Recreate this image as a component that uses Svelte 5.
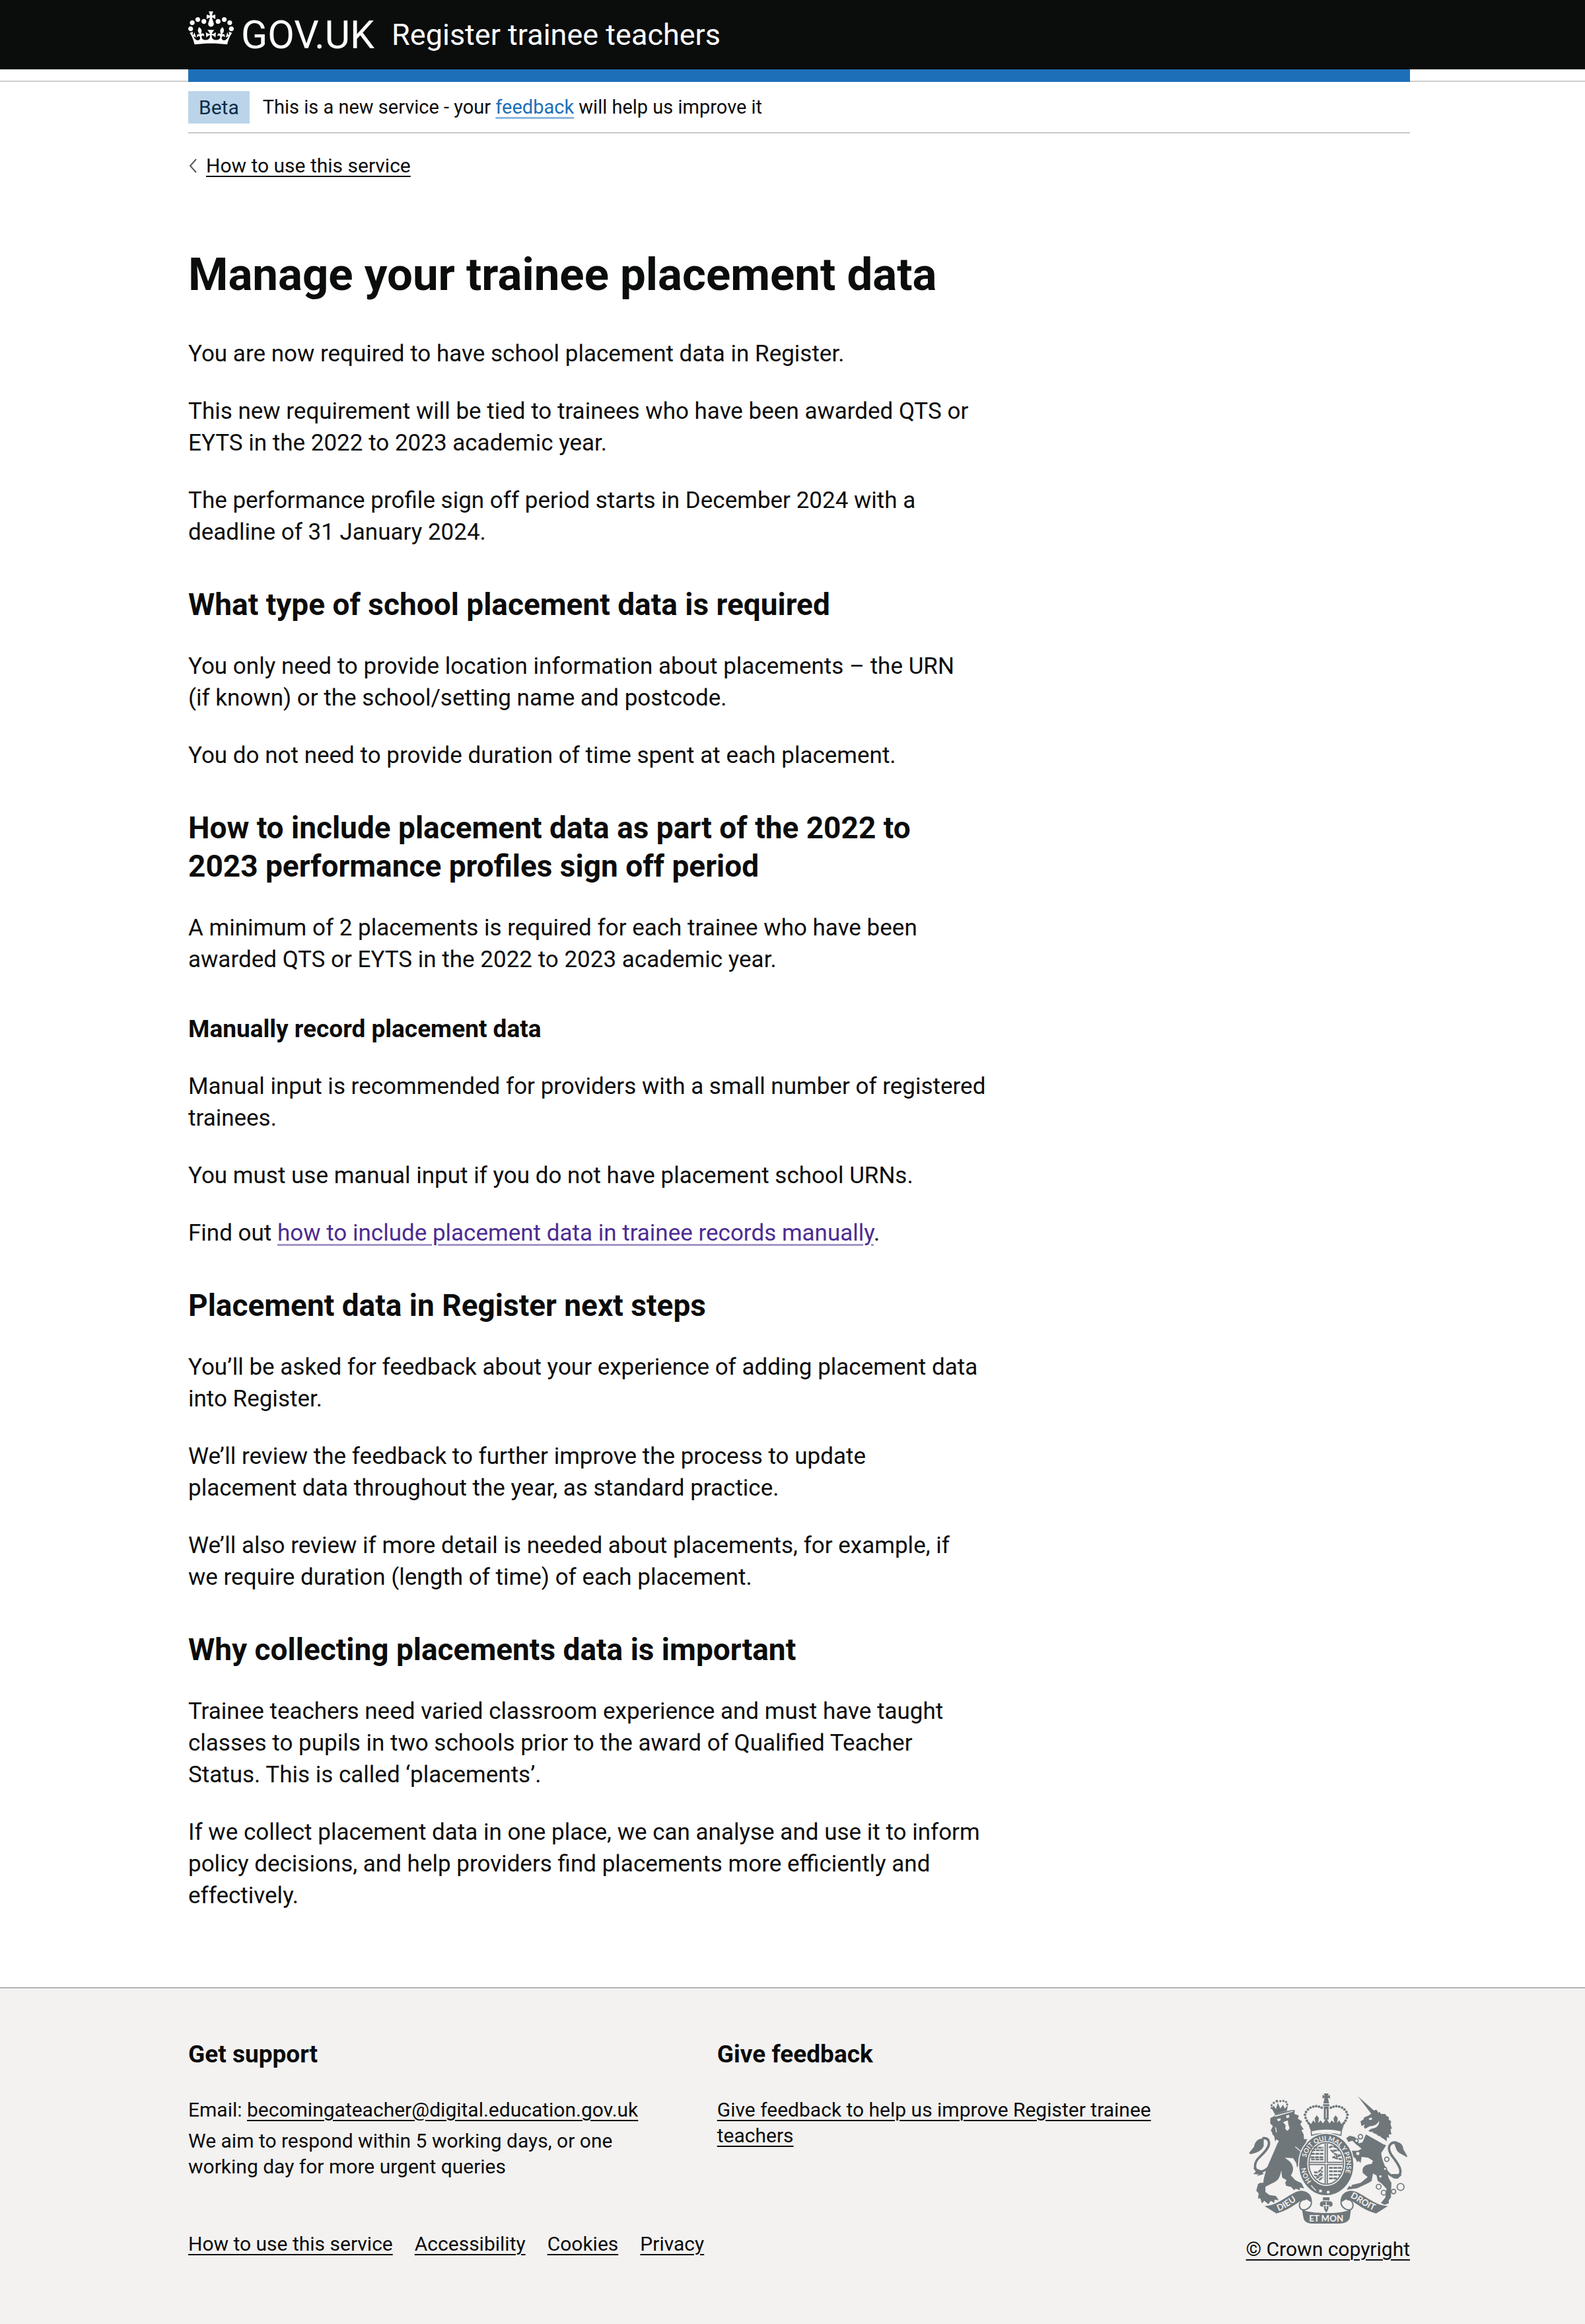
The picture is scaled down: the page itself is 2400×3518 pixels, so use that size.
<script>
  const footerLinks = ['How to use this service', 'Accessibility', 'Cookies', 'Privacy'];

  // Beads along the two arches of the central crown.
  const arch = [
    [478, 178], [466, 173], [453, 171], [440, 173], [427, 178], [416, 186], [407, 197], [402, 210], [405, 224], [411, 237], [418, 248]
  ];
  const beads = [...arch, ...arch.map(([x, y]) => [998 - x, y])];

  // Links of the unicorn's chain: x, y, radius.
  const chain = [
    [655, 310, 10], [637, 328, 8], [643, 387, 10], [775, 413, 10], [767, 457, 7],
    [746, 491, 8], [738, 538, 11], [761, 565, 11], [806, 560, 10], [838, 539, 16]
  ];
</script>

<svelte:head><title>Manage your trainee placement data - Register trainee teachers</title></svelte:head>

<div class="page">
  <header class="header">
    <div class="container header-row">
      <a class="logo" href="#home" aria-label="GOV.UK">
        <svg class="crown" viewBox="0 0 132 97" aria-hidden="true">
          <path d="M25 30.2c3.5 1.5 7.7-.2 9.1-3.7 1.5-3.6-.2-7.8-3.9-9.2-3.6-1.4-7.6.3-9.1 3.9-1.4 3.5.3 7.5 3.9 9zM9 39.5c3.6 1.5 7.8-.2 9.2-3.7 1.5-3.6-.2-7.8-3.9-9.1-3.6-1.5-7.6.2-9.1 3.8-1.4 3.5.3 7.5 3.8 9zM4.4 57.2c3.5 1.5 7.7-.2 9.1-3.8 1.5-3.6-.2-7.7-3.9-9.1-3.5-1.5-7.6.3-9.1 3.8-1.4 3.5.3 7.6 3.9 9.1zm38.3-21.4c3.5 1.5 7.7-.2 9.1-3.8 1.5-3.6-.2-7.7-3.9-9.1-3.6-1.5-7.6.3-9.1 3.8-1.3 3.6.4 7.7 3.9 9.1zm64.4-5.6c-3.6 1.5-7.8-.2-9.1-3.7-1.5-3.6.2-7.8 3.8-9.2 3.6-1.4 7.7.3 9.2 3.9 1.3 3.5-.4 7.5-3.9 9zm15.9 9.3c-3.6 1.5-7.7-.2-9.1-3.7-1.5-3.6.2-7.8 3.7-9.1 3.6-1.5 7.7.2 9.2 3.8 1.5 3.5-.3 7.5-3.8 9zm4.7 17.7c-3.6 1.5-7.8-.2-9.2-3.8-1.5-3.6.2-7.7 3.9-9.1 3.6-1.5 7.7.3 9.2 3.8 1.3 3.5-.4 7.6-3.9 9.1zM89.3 35.8c-3.6 1.5-7.8-.2-9.2-3.8-1.4-3.6.2-7.7 3.9-9.1 3.6-1.5 7.7.3 9.2 3.8 1.4 3.6-.3 7.7-3.9 9.1zM69.7 17.7l8.9 4.7V9.3l-8.9 2.8c-.2-.3-.5-.6-.9-.9L72.4 0H59.6l3.5 11.2c-.3.3-.6.5-.9.9l-8.8-2.8v13.1l8.8-4.7c.3.3.6.7.9.9l-5 15.4v.1c-.2.8-.4 1.6-.4 2.4 0 4.1 3.1 7.5 7 8.1h.2c.3 0 .7.1 1 .1.4 0 .7 0 1-.1h.2c4-.6 7.1-4.1 7.1-8.1 0-.8-.1-1.7-.4-2.4V34l-5.1-15.4c.4-.2.7-.6 1-.9zM66 92.8c16.9 0 32.8 1.1 47.1 3.2 4-16.9 8.9-26.7 14-33.5l-9.6-3.4c1 4.9 1.1 7.2 0 10.2-1.5-1.4-3-4.3-4.2-8.7L108.6 76c2.8-2 5-3.2 7.5-3.3-4.4 9.4-10 11.9-13.6 11.2-4.3-.8-6.3-4.6-5.6-7.9 1-4.7 5.7-5.9 8-.5 4.3-8.7-3-11.4-7.6-8.8 7.1-7.2 7.9-13.5 2.1-21.1-8 6.1-8.1 12.3-4.5 20.8-4.7-5.4-12.1-2.5-9.5 6.2 3.4-5.2 7.9-2 7.2 3.1-.6 4.3-6.4 7.8-13.5 7.2-10.3-.9-10.9-8-11.2-13.8 2.5-.5 7.1 1.8 11 7.3L80.2 60c-4.1 4.4-8 5.3-12.3 5.4 1.4-4.4 8-11.6 8-11.6H55.5s6.4 7.2 7.9 11.6c-4.2-.1-8-1-12.3-5.4l1.4 16.4c3.9-5.5 8.5-7.7 10.9-7.3-.3 5.8-.9 12.8-11.1 13.8-7.2.6-12.9-2.9-13.5-7.2-.7-5 3.8-8.3 7.1-3.1 2.7-8.7-4.6-11.6-9.4-6.2 3.7-8.5 3.6-14.7-4.6-20.8-5.8 7.6-5 13.9 2.2 21.1-4.7-2.6-11.9.1-7.7 8.8 2.3-5.5 7.1-4.2 8.1.5.7 3.3-1.3 7.1-5.7 7.9-3.5.7-9-1.8-13.5-11.2 2.5.1 4.7 1.3 7.5 3.3l-4.7-15.4c-1.2 4.4-2.7 7.2-4.3 8.7-1.1-3-.9-5.3 0-10.2l-9.5 3.4c5 6.9 9.9 16.7 14 33.5 14.8-2.1 30.8-3.2 47.7-3.2z" />
        </svg>
        <span class="wordmark">GOV.UK</span>
      </a>
      <a class="service" href="#service">Register trainee teachers</a>
    </div>
  </header>
  <div class="strip"><div class="container"><div class="bar"></div></div></div>

  <div class="container">
    <div class="phase">
      <strong class="tag">Beta</strong>
      <span class="phase-text">This is a new service - your <a class="link" href="#feedback">feedback</a> will help us improve it</span>
    </div>

    <a class="back" href="#guidance">
      <svg viewBox="0 0 14 22" aria-hidden="true"><path d="M12 1 3 11l9 10" /></svg>
      <span>How to use this service</span>
    </a>

    <main>
      <h1>Manage your trainee placement data</h1>
      <p>You are now required to have school placement data in Register.</p>
      <p>This new requirement will be tied to trainees who have been awarded QTS or EYTS in the 2022 to 2023 academic year.</p>
      <p>The performance profile sign off period starts in December 2024 with a deadline of 31 January 2024.</p>

      <h2>What type of school placement data is required</h2>
      <p>You only need to provide location information about placements – the URN (if&nbsp;known) or the school/setting name and postcode.</p>
      <p>You do not need to provide duration of time spent at each placement.</p>

      <h2>How to include placement data as part of the 2022 to 2023&nbsp;performance profiles sign off period</h2>
      <p>A minimum of 2 placements is required for each trainee who have been awarded QTS or EYTS in the 2022 to 2023 academic year.</p>

      <h3>Manually record placement data</h3>
      <p>Manual input is recommended for providers with a small number of registered trainees.</p>
      <p>You must use manual input if you do not have placement school URNs.</p>
      <p>Find out <a class="link visited" href="#manual">how to include placement data in trainee records manually</a>.</p>

      <h2>Placement data in Register next steps</h2>
      <p>You’ll be asked for feedback about your experience of adding placement data into Register.</p>
      <p>We’ll review the feedback to further improve the process to update placement&nbsp;data throughout the year, as standard practice.</p>
      <p>We’ll also review if more detail is needed about placements, for example, if we&nbsp;require duration (length of time) of each placement.</p>

      <h2>Why collecting placements data is important</h2>
      <p>Trainee teachers need varied classroom experience and must have taught classes to pupils in two schools prior to the award of Qualified Teacher Status. This is called ‘placements’.</p>
      <p>If we collect placement data in one place, we can analyse and use it to inform policy decisions, and help providers find placements more efficiently and effectively.</p>
    </main>
  </div>

  <footer>
    <div class="container footer-row">
      <div class="footer-main">
        <div class="columns">
          <section>
            <h3>Get support</h3>
            <ul>
              <li>Email: <a href="mailto:becomingateacher@digital.education.gov.uk">becomingateacher@digital.education.gov.uk</a></li>
              <li>We aim to respond within 5 working days, or one working day for more urgent queries</li>
            </ul>
          </section>
          <section>
            <h3>Give feedback</h3>
            <ul><li><a href="#feedback">Give feedback to help us improve Register trainee teachers</a></li></ul>
          </section>
        </div>
        <nav aria-label="Support links">
          {#each footerLinks as label}<a href="#footer">{label}</a>{/each}
        </nav>
      </div>

      <a class="copyright" href="#copyright">
        <svg class="arms" viewBox="147 113 721 593" aria-hidden="true">
          <!-- lion -->
          <g class="ink">
            <path d="M244 226 262 216 268 204 345 188 356 190 354 206 374 214 370 228 389 240 381 254 396 276 386 280 396 300 398 322 412 320 404 345 384 372 398 395 404 425 398 456 388 442 382 458 374 440 366 450 362 430 348 408 310 406 332 422C352 442 352 466 338 486L358 508 386 522 399 546 378 542 380 554 360 547 352 554 340 540 316 534 312 520 318 508 298 496 294 462C290 492 280 512 254 522L222 538 222 562 240 576 270 580 283 600 264 597 262 612 246 602 235 618 217 602 206 614 198 590 188 592 191 568 180 556 188 526 198 520 212 520C215 490 228 450 245 415L275 345 283 330 272 322 266 332 262 308 254 300 252 290 246 282 256 262 244 250Z" />
            <path d="M214 318C186 318 174 334 170 356L147 384 154 390C176 384 204 378 214 352Z" />
            <path d="M252 184 264 206 320 192 324 166 310 182 302 164 290 182 278 156 270 184 258 168Z" />
            <path d="M166 452 178 470 166 480 192 482 182 490 214 480 200 462Z" />
          </g>
          <path class="line" d="M252 432C234 456 214 470 194 470 164 460 172 424 196 402 224 376 240 356 238 336 236 320 224 315 208 317" />
          <g class="dots"><circle cx="250" cy="167" r="5" /><circle cx="250" cy="179" r="5" /><circle cx="260" cy="156" r="5" /><circle cx="274" cy="148" r="6" /><circle cx="290" cy="148" r="5" /><circle cx="304" cy="147" r="5" /><circle cx="316" cy="152" r="5" /><circle cx="321" cy="163" r="5" /></g>
          <g class="paper">
            <path d="M264 214 348 192 348 196 266 219ZM274 230 292 226 290 236 280 240ZM316 214 330 210 330 222 318 226ZM302 244 324 236 326 252 332 272 322 284 312 274 314 258Z" />
            <path class="cut" d="M268 268 272 290M358 356 384 378" />
          </g>

          <!-- unicorn -->
          <g class="ink">
            <path d="M643 126 722 196 706 208Z" />
            <path d="M655 240 668 232 672 222 692 214 712 200 720 188 730 188 736 202 742 196 748 206 768 206 774 216 784 220 784 232 795 240 792 254 798 272 792 276 796 300 784 300 786 316 776 312 774 332 764 322 720 296 690 284 704 274C728 272 742 258 740 238 730 256 716 262 698 262L676 274 670 264 676 254 660 262Z" />
            <path d="M680 300 772 350 750 384C752 420 768 440 776 470L784 500 796 520 794 586 784 600 784 614 764 620 748 612 768 588 774 548 752 524 734 512 728 486 712 478 706 512 690 522 640 545 592 552 604 534 612 540 616 530 656 520 688 494 666 476C660 450 672 436 706 434L712 420 690 406 660 402 656 430 646 420 640 426 632 408 620 402 616 374 644 374 660 364 634 344 618 328 600 334 590 316 606 306 630 312 648 340 664 336Z" />
            <path d="M806 334C826 330 850 340 850 366L868 398 866 404C848 390 826 388 818 366Z" />
            <path d="M796 480 804 500 824 502 844 484 826 480Z" />
          </g>
          <path class="line" d="M762 446C780 484 806 502 830 486 848 468 830 440 810 412 788 386 780 366 788 350 796 338 808 334 822 338" />
          <path class="collar" d="M676 292 764 344M692 286 698 300 708 290 716 308 726 300 734 320 744 310 752 330 760 322" />
          <path class="paper" d="M692 228 706 222 708 232 696 234Z" />
          {#each chain as [x, y, r]}<circle class="chain" cx={x} cy={y} {r} />{/each}

          <!-- central crown -->
          <g class="ink">
            <path d="M488 113H510L506 124 516 119V137L506 132 510 148 514 170H484L488 148 492 132 482 137V119L492 124Z" />
            <path d="M488 172H510V232H488Z" />
            <path d="M414 240 430 252 440 236 450 248 446 226 456 212 466 226 462 248 474 236 484 250 499 226 514 250 524 236 536 248 532 226 542 212 552 226 548 248 558 236 568 252 584 240 572 280 566 284C530 274 468 274 432 284L426 278Z" />
          </g>
          <g class="dots">{#each beads as [x, y]}<circle cx={x} cy={y} r="6" />{/each}</g>
          <path class="cut" d="M499 184V226M484 160H514" />
          <path class="thin" d="M430 284C468 272 530 272 568 284L566 304C530 292 468 292 432 304Z" />

          <!-- garter and shield -->
          <ellipse class="garter" cx="499" cy="437" rx="126" ry="142" />
          <ellipse class="ring" cx="499" cy="432" rx="84" ry="100" />
          <ellipse class="inner" cx="499" cy="432" rx="76" ry="92" />
          <path class="hatch" d="M432 372H486M430 388H486M428 404H486M442 360H486M430 414H486M512 360C530 348 548 356 556 372L524 374 540 390 566 396 528 404 570 414M512 452H572M512 468H570M512 484H562M512 500H548M444 470C460 480 472 466 482 448M444 484C462 496 474 480 482 466M454 500 482 482M466 508 484 494" />
          <path class="beam" d="M499 342V524M422 432H576" />
          <path class="cut" d="M499 342V524M422 432H576" />
          <path id="garter-top" class="guide" d="M405 417A94 109 0 1 1 545 531" />
          <path id="garter-left" class="guide" d="M452 531A94 109 0 0 1 405 436" />
          <text class="motto"><textPath href="#garter-top" startOffset="12">SOIT QUI MAL Y PENSE</textPath></text>
          <text class="motto"><textPath href="#garter-left" startOffset="26">HON</textPath></text>
          <path class="cut" d="M430 532 452 556" />
          <path class="paper" d="M467 552h12v11h-12ZM502 557h12v11h-12Z" />

          <!-- ribbon -->
          <g class="ink">
            <path d="M218 626C252 624 280 610 318 586 346 568 366 556 388 556 420 560 436 580 434 612L410 596 388 600C352 620 330 644 272 660Z" />
            <path d="M780 626C746 624 718 610 680 586 652 568 632 556 610 556 578 560 562 580 564 612L588 596 610 600C646 620 668 644 726 660Z" />
            <path d="M388 640C412 664 586 664 612 640L606 682C598 700 580 706 556 706H442C418 706 402 700 396 684Z" />
            <path d="M484 586H514V602L508 612C514 598 528 604 528 618 528 630 516 632 510 626L508 642 499 656 490 642 488 626C482 632 470 630 470 618 470 604 484 598 490 612L484 602Z" />
          </g>
          <path class="cut" d="M486 602H512M499 606V640M484 624H514" />
          <path class="curl" d="M404 597C374 596 372 630 384 640 400 650 430 636 432 610M594 597C624 596 626 630 614 640 598 650 568 636 566 610" />
          <path id="band-left" class="guide" d="M280 650C320 636 346 610 392 584" />
          <path id="band-right" class="guide" d="M604 584C650 606 676 634 730 652" />
          <text class="band"><textPath href="#band-left" startOffset="2">DIEU</textPath></text>
          <text class="band"><textPath href="#band-right" startOffset="4">DROIT</textPath></text>
          <text class="band" x="499" y="698" text-anchor="middle">ET MON</text>
        </svg>
        <span>© Crown copyright</span>
      </a>
    </div>
  </footer>
</div>

<style>
  :global(body) { margin: 0; background: #fff; }
  .page { font: 400 30px/39px Roboto, Arial, sans-serif; color: #0b0c0c; min-height: 100vh; display: flex; flex-direction: column; }
  .container { box-sizing: border-box; width: 100%; max-width: 1870px; margin: 0 auto; padding-left: 20px; }
  a { color: inherit; text-decoration-thickness: 2px; text-underline-offset: 5px; }
  h1, h2, h3, p, ul { margin: 0; }

  .header { background: #0b0c0c; color: #fff; }
  .header-row { display: flex; align-items: center; gap: 26px; height: 105px; }
  .header a { text-decoration: none; }
  .logo { display: flex; align-items: center; gap: 11px; }
  .crown { width: 69px; height: 51px; fill: #fff; margin-bottom: 20px; }
  .wordmark { font-size: 59px; line-height: 58px; }
  .service { font-size: 45px; line-height: 58px; }
  .strip { border-bottom: 2px solid #cecece; height: 17px; }
  .bar { height: 19px; background: #1d70b8; }

  .phase { display: flex; align-items: center; gap: 20px; padding: 14px 0 13px; border-bottom: 2px solid #c8cacb; }
  .phase-text { font-size: 29px; }
  .tag { background: #bbd4ea; color: #0c2d4a; font-weight: 400; padding: 5px 16px; }
  .link { color: #1d70b8; text-decoration-color: #8eb7db; text-decoration-thickness: 3px; }
  .visited { color: #4c2c92; text-decoration-color: #a595c8; }
  .back { display: inline-flex; align-items: center; gap: 13px; margin-top: 29px; text-decoration: none; }
  .back span { text-decoration: underline 2px; text-underline-offset: 5px; }
  .back svg { width: 14px; height: 22px; fill: none; stroke: #505a5f; stroke-width: 2; }

  main { max-width: 1214px; padding: 106px 0 75px; font-size: 35px; line-height: 48px; }
  h1 { font-size: 69px; line-height: 77px; margin-bottom: 58px; }
  p { margin-bottom: 39px; }
  h2 { font-size: 46px; line-height: 58px; margin: 56px 0 41px; }
  h3 { font-size: 37px; line-height: 48px; margin: 57px 0 39px; }

  footer { flex: 1; background: #f3f2f1; border-top: 2px solid #b1b4b6; padding: 76px 0 92px; }
  .footer-row { display: flex; align-items: flex-end; gap: 58px; }
  .footer-main { flex: 1; padding-bottom: 8px; }
  .columns { display: grid; grid-template-columns: 1fr 1fr; gap: 58px; margin-bottom: 78px; }
  footer h3 { margin: 0 0 40px; }
  ul { list-style: none; padding: 0; max-width: 700px; }
  li + li { margin-top: 8px; }
  nav { display: flex; gap: 33px; }
  .copyright { display: flex; flex-direction: column; align-items: center; gap: 19px; }

  .arms { width: 240px; height: 197px; }
  .ink, .dots { fill: #6f777b; }
  .paper { fill: #f3f2f1; }
  .guide { fill: none; }
  .line { fill: none; stroke: #6f777b; stroke-width: 11; }
  .collar { fill: none; stroke: #f3f2f1; stroke-width: 5; }
  .chain { fill: #f3f2f1; stroke: #6f777b; stroke-width: 5; }
  .cut { fill: none; stroke: #f3f2f1; stroke-width: 4; }
  .thin { fill: #f3f2f1; stroke: #6f777b; stroke-width: 5; }
  .garter { fill: #6f777b; stroke: #f3f2f1; stroke-width: 5; }
  .ring { fill: none; stroke: #f3f2f1; stroke-width: 5; }
  .inner { fill: #f3f2f1; }
  .hatch { fill: none; stroke: #6f777b; stroke-width: 8; stroke-dasharray: 17 3; }
  .beam { fill: none; stroke: #6f777b; stroke-width: 15; }
  .curl { fill: none; stroke: #6f777b; stroke-width: 6; }
  .motto, .band { fill: #f3f2f1; font-family: Lato, Arial, sans-serif; font-weight: 700; }
  .motto { font-size: 30px; }
  .band { font-size: 40px; }
</style>
